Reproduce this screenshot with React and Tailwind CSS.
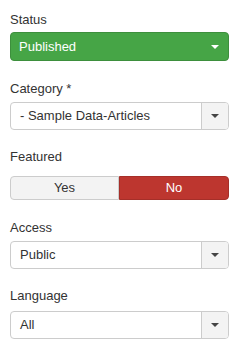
import React from "react";

function Caret({ color }) {
  return (
    <svg width="8" height="4" viewBox="0 0 8 4" className="block">
      <path d="M0 0 L8 0 L4 4 Z" fill={color} />
    </svg>
  );
}

function Label({ children, className = "" }) {
  return (
    <div className={"h-[18px] leading-[18px] text-[13px] text-[#333] " + className}>{children}</div>
  );
}

function Select({ value, className = "" }) {
  return (
    <div
      className={
        "flex h-[28px] w-[219px] overflow-hidden rounded-[4px] border border-[#ccc] bg-white " + className
      }
    >
      <div className="flex flex-1 items-center pl-[9px] text-[13px] text-[#333]">{value}</div>
      <div className="flex w-[27px] items-center justify-center border-l border-[#ccc] bg-[#f3f3f3]">
        <Caret color="#444" />
      </div>
    </div>
  );
}

export default function App() {
  return (
    <div
      className="flex h-[353px] w-[244px] flex-col bg-white pl-[10px] pt-[11px]"
      style={{ fontFamily: '"Liberation Sans", Arial, sans-serif' }}
    >
      <Label>Status</Label>
      <div className="mt-[3px] flex h-[29px] w-[219px] items-center justify-between rounded-[4px] border border-[#3d8f3d] bg-[#46a546] pl-[8px] pr-[9px] text-[13px] text-white">
        <span>Published</span>
        <Caret color="#fff" />
      </div>

      <Label className="mt-[19px]">Category *</Label>
      <Select value="- Sample Data-Articles" className="mt-[4px]" />

      <Label className="mt-[18px]">Featured</Label>
      <div className="mt-[10px] flex h-[24px] w-[219px] text-[13px]">
        <div className="flex w-[109px] items-center justify-center rounded-l-[4px] border border-[#ccc] bg-[#f3f3f3] text-[#333]">
          Yes
        </div>
        <div className="flex flex-1 items-center justify-center rounded-r-[4px] border border-[#a52f29] bg-[#bd362f] text-white">
          No
        </div>
      </div>

      <Label className="mt-[19px]">Access</Label>
      <Select value="Public" className="mt-[4px]" />

      <Label className="mt-[18px]">Language</Label>
      <Select value="All" className="mt-[6px]" />
    </div>
  );
}
